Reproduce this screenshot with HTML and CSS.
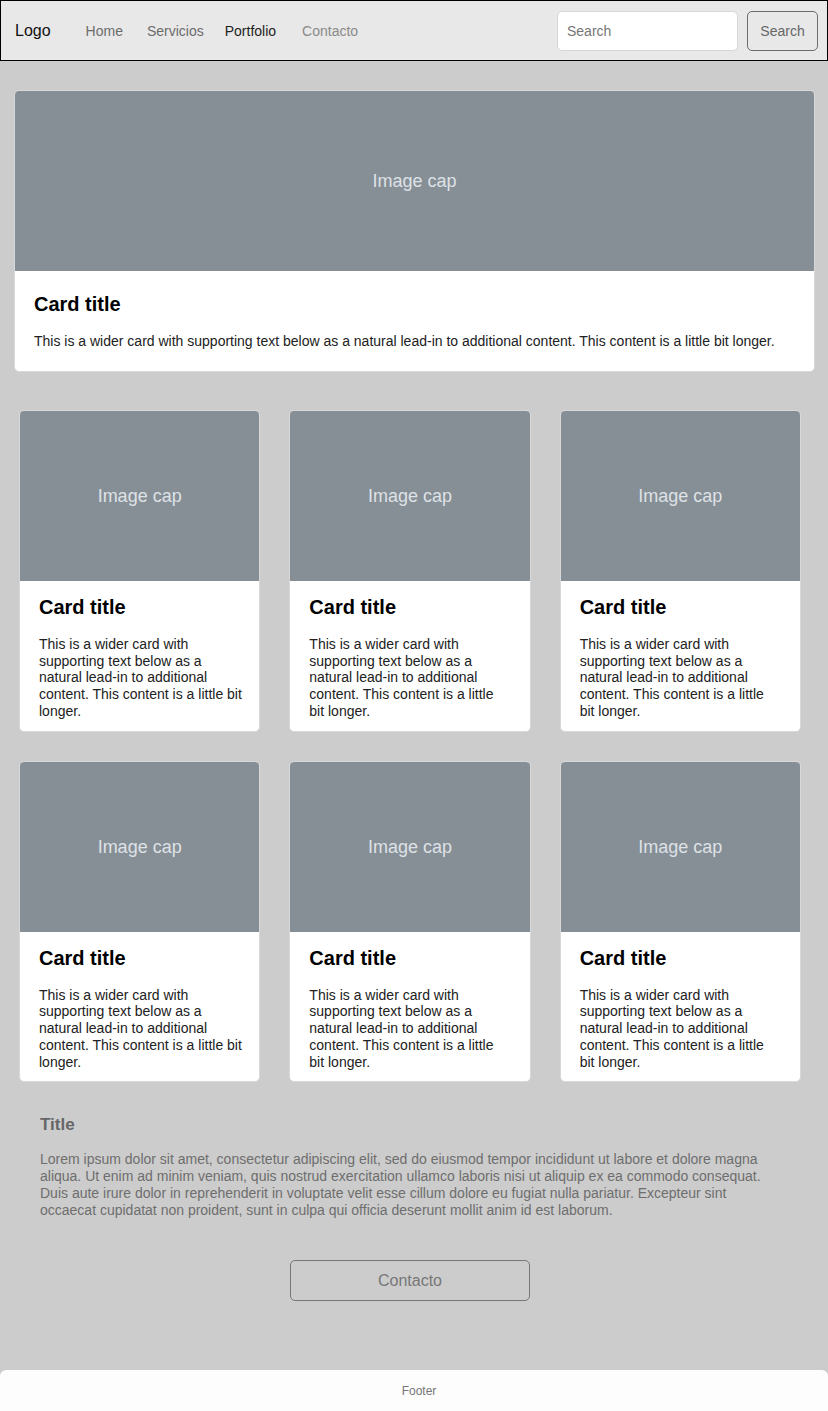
FILE: index.html
```html
<!DOCTYPE html>
<html lang="es">
<head>
<meta charset="utf-8">
<title>Portfolio</title>
<link rel="stylesheet" href="styles.css">
</head>
<body>
<nav class="navbar">
  <a class="brand" href="#">Logo</a>
  <ul class="nav-links">
    <li class="nav-item"><a class="nav-link" href="#">Home</a></li>
    <li class="nav-item nav-item-servicios"><a class="nav-link" href="#">Servicios</a></li>
    <li class="nav-item nav-item-portfolio"><a class="nav-link active" href="#">Portfolio</a></li>
    <li class="nav-item nav-item-contacto"><a class="nav-link disabled" href="#">Contacto</a></li>
  </ul>
  <form class="search">
    <input class="search-input" type="text" placeholder="Search">
    <button class="search-btn" type="button">Search</button>
  </form>
</nav>

<main class="main">
  <section class="card card-wide">
    <div class="card-img card-img-wide">Image cap</div>
    <div class="card-body">
      <h5 class="card-title">Card title</h5>
      <p class="card-text">This is a wider card with supporting text below as a natural lead-in to additional content. This content is a little bit longer.</p>
    </div>
  </section>

  <section class="grid">
    <div class="card"><div class="card-img">Image cap</div><div class="card-body"><h5 class="card-title">Card title</h5><p class="card-text">This is a wider card with supporting text below as a natural lead-in to additional content. This content is a little bit longer.</p></div></div>
    <div class="card"><div class="card-img">Image cap</div><div class="card-body"><h5 class="card-title">Card title</h5><p class="card-text">This is a wider card with supporting text below as a natural lead-in to additional content. This content is a little bit longer.</p></div></div>
    <div class="card"><div class="card-img">Image cap</div><div class="card-body"><h5 class="card-title">Card title</h5><p class="card-text">This is a wider card with supporting text below as a natural lead-in to additional content. This content is a little bit longer.</p></div></div>
    <div class="card"><div class="card-img">Image cap</div><div class="card-body"><h5 class="card-title">Card title</h5><p class="card-text">This is a wider card with supporting text below as a natural lead-in to additional content. This content is a little bit longer.</p></div></div>
    <div class="card"><div class="card-img">Image cap</div><div class="card-body"><h5 class="card-title">Card title</h5><p class="card-text">This is a wider card with supporting text below as a natural lead-in to additional content. This content is a little bit longer.</p></div></div>
    <div class="card"><div class="card-img">Image cap</div><div class="card-body"><h5 class="card-title">Card title</h5><p class="card-text">This is a wider card with supporting text below as a natural lead-in to additional content. This content is a little bit longer.</p></div></div>
  </section>

  <section class="about">
    <h4 class="about-title">Title</h4>
    <p class="about-text">Lorem ipsum dolor sit amet, consectetur adipiscing elit, sed do eiusmod tempor incididunt ut labore et dolore magna aliqua. Ut enim ad minim veniam, quis nostrud exercitation ullamco laboris nisi ut aliquip ex ea commodo consequat. Duis aute irure dolor in reprehenderit in voluptate velit esse cillum dolore eu fugiat nulla pariatur. Excepteur sint occaecat cupidatat non proident, sunt in culpa qui officia deserunt mollit anim id est laborum.</p>
  </section>

  <div class="cta">
    <button class="cta-btn" type="button">Contacto</button>
  </div>
</main>

<footer class="footer">Footer</footer>
</body>
</html>
```

FILE: styles.css
```css
* { box-sizing: border-box; }

html, body {
  margin: 0;
  padding: 0;
}

body {
  background: #cccccc;
  font-family: "Liberation Sans", Arial, sans-serif;
  color: #212529;
  width: 828px;
  min-height: 1411px;
  display: flex;
  flex-direction: column;
}

/* Navbar */
.navbar {
  height: 61px;
  background: #e8e8e8;
  border: 1px solid #000;
  display: flex;
  align-items: center;
  padding: 0 9px 0 14px;
}

.brand {
  font-size: 16px;
  color: #111;
  text-decoration: none;
  margin-right: 35px;
}

.nav-links {
  list-style: none;
  margin: 0;
  padding: 0;
  display: flex;
  gap: 23px;
  flex: 1;
}

.nav-item-servicios { margin-left: 1px; }
.nav-item-portfolio { margin-left: -2px; }
.nav-item-contacto { margin-left: 3px; }

.nav-link {
  font-size: 14px;
  color: #6c6c6c;
  text-decoration: none;
}

.nav-link.active { color: #1e1e1e; }
.nav-link.disabled { color: #8a8a8a; }

.search {
  display: flex;
  gap: 9px;
  margin: 0;
}

.search-input {
  width: 181px;
  height: 40px;
  border: 1px solid #d6d6d6;
  border-radius: 5px;
  background: #fff;
  padding: 0 9px;
  font-family: inherit;
  font-size: 14px;
  color: #333;
}

.search-input::placeholder { color: #767676; }

.search-btn {
  width: 71px;
  height: 40px;
  border: 1px solid #6c6c6c;
  border-radius: 5px;
  background: transparent;
  font-family: inherit;
  font-size: 14px;
  color: #666;
  padding: 0;
}

/* Main */
.main {
  flex: 1;
  padding-top: 29px;
}

.card {
  background: #fff;
  border: 1px solid #d8d8d8;
  border-radius: 5px;
  overflow: hidden;
  display: flex;
  flex-direction: column;
}

.card-wide {
  margin: 0 13px 0 14px;
}

.card-img {
  height: 170px;
  background: #868e96;
  color: #dee2e6;
  font-size: 18px;
  display: flex;
  align-items: center;
  justify-content: center;
  padding-top: 1px;
}

.card-img-wide { height: 180px; padding-top: 0; }

.card-body {
  flex: 1;
}

.card-title {
  margin: 0;
  font-size: 20px;
  font-weight: bold;
  line-height: 24px;
  color: #000;
}

.card-text {
  margin: 0;
  font-size: 14px;
  line-height: 16.75px;
  color: #212121;
}

.card-wide .card-body { padding: 21px 19px 21px 19px; }
.card-wide .card-title { margin-bottom: 17px; }

.grid {
  display: grid;
  grid-template-columns: repeat(3, 1fr);
  column-gap: 29px;
  row-gap: 29px;
  padding: 0 27px 0 19px;
  margin-top: 38px;
}

.grid .card-body { padding: 14px 19px 11px 19px; }
.grid .card:nth-child(3n+1) .card-body { padding-right: 16px; }
.grid .card-title { margin-bottom: 17px; }

/* About */
.about {
  padding: 33px 40px 0 40px;
}

.about-title {
  margin: 0 0 16px;
  font-size: 17px;
  font-weight: bold;
  line-height: 20px;
  color: #666;
}

.about-text {
  margin: 0;
  font-size: 14px;
  line-height: 16.75px;
  color: #6e6e6e;
  padding-right: 20px;
}

.cta {
  display: flex;
  justify-content: center;
  padding: 42px 8px 0 0;
}

.cta-btn {
  width: 240px;
  height: 41px;
  border: 1px solid #777;
  border-radius: 5px;
  background: transparent;
  font-family: inherit;
  font-size: 16px;
  color: #777;
}

/* Footer */
.footer {
  height: 41px;
  background: #fdfdfd;
  border-radius: 6px 6px 0 0;
  display: flex;
  align-items: center;
  justify-content: center;
  font-size: 12px;
  color: #777;
  padding-left: 10px;
}
```
